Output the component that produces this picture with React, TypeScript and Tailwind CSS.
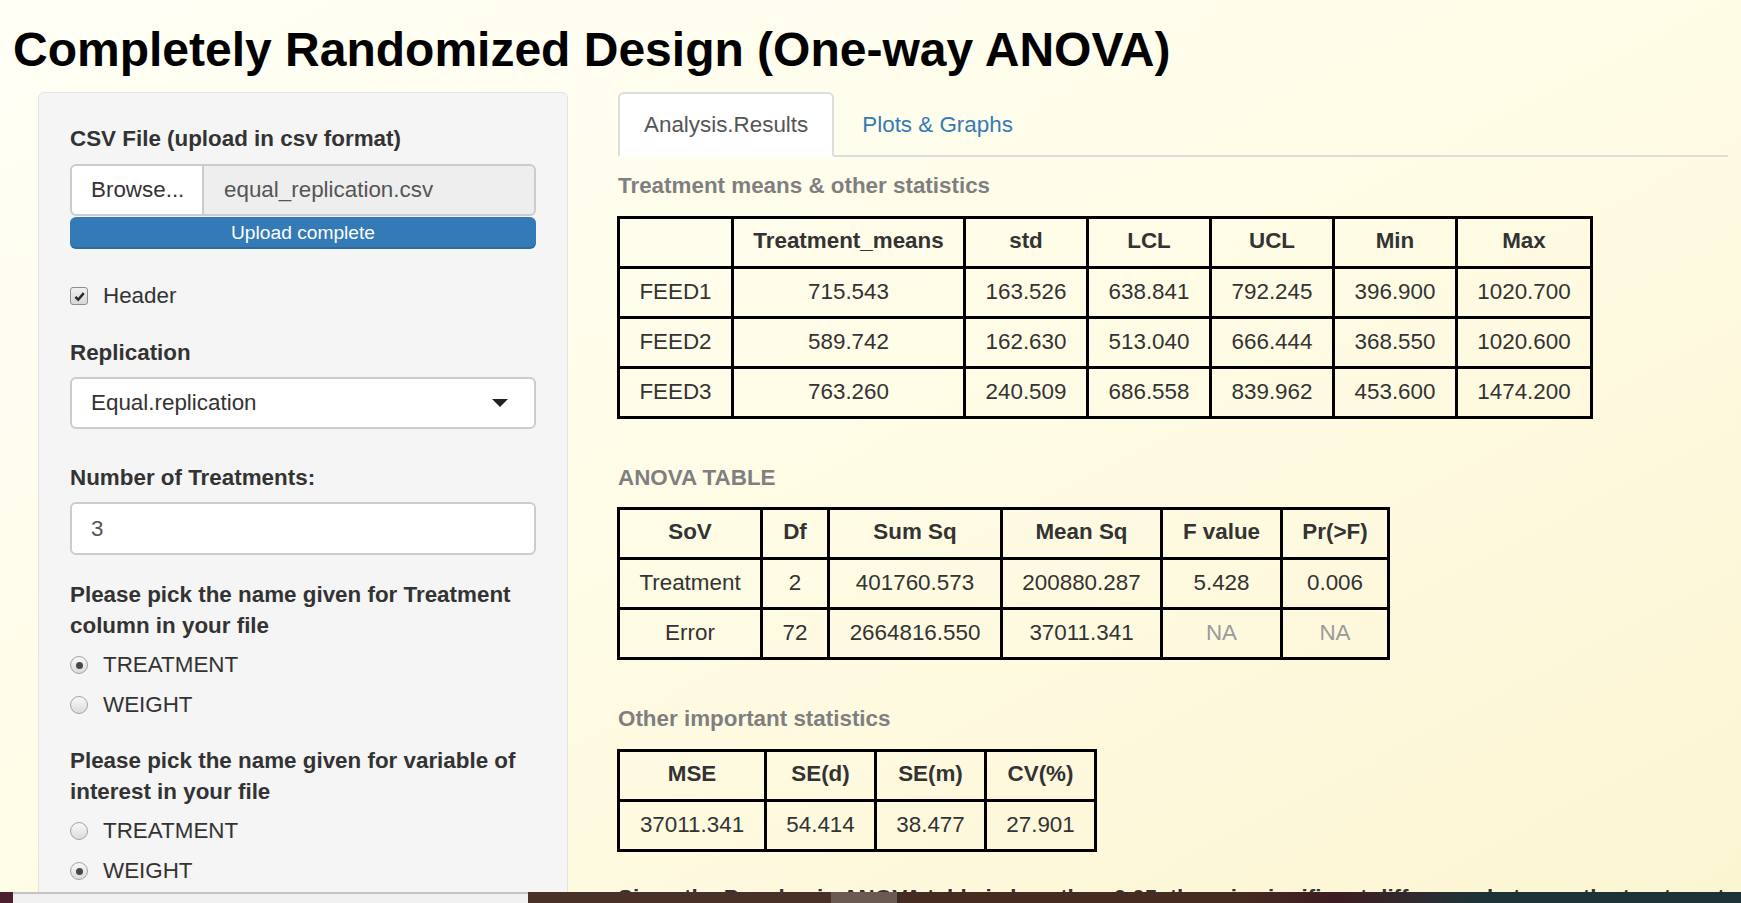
import React from "react";

const FONT = "font-['Liberation_Sans',Arial,Helvetica,sans-serif]";

type TableProps = {
  gridClass: string;
  head: string[];
  rows: string[][];
};

const StatTable: React.FC<TableProps> = ({ gridClass, head, rows }) => {
  return (
    <div className={`grid w-max border-l-[3px] border-t-[3px] border-black ${gridClass}`}>
      {head.map((h, i) => (
        <div
          key={"h" + i}
          className="flex h-[50px] items-center justify-center border-b-[3px] border-r-[3px] border-black pb-[3px] font-bold"
        >
          {h}
        </div>
      ))}
      {rows.map((r, ri) =>
        r.map((c, ci) => (
          <div
            key={ri + "-" + ci}
            className={`flex h-[50px] items-center justify-center border-b-[3px] border-r-[3px] border-black pb-[2px] ${
              c === "NA" ? "text-[#9a9a9a]" : ""
            }`}
          >
            {c}
          </div>
        ))
      )}
    </div>
  );
};

const Radio: React.FC<{ checked?: boolean; label: string }> = ({ checked, label }) => (
  <div className="mt-[8px] flex h-[32px] items-center">
    <span className="flex h-[18px] w-[18px] items-center justify-center rounded-full border border-[#a3a3a3] bg-linear-to-b from-[#f8f8f8] to-[#dcdcdc]">
      {checked && <span className="h-[7px] w-[7px] rounded-full bg-[#474747]" />}
    </span>
    <span className="ml-[15px]">{label}</span>
  </div>
);

const Sidebar: React.FC = () => (
  <aside className="ml-[38px] w-[530px] shrink-0 rounded-[6px] border border-[#e3e3e3] bg-[#f5f5f5] px-[31px] pb-[40px] pt-[30px]">
    <label className="block font-bold">CSV File (upload in csv format)</label>
    <div className="mt-[9px] flex h-[52px]">
      <div className="flex w-[134px] items-center rounded-l-[6px] border-2 border-[#cccccc] bg-white pl-[19px]">
        Browse...
      </div>
      <div className="flex flex-1 items-center rounded-r-[6px] border-2 border-l-0 border-[#cccccc] bg-[#eeeeee] pl-[20px] text-[#555]">
        equal_replication.csv
      </div>
    </div>
    <div className="mt-[1px] h-[32px] rounded-[6px] bg-[#337ab7] text-center text-[19.2px] leading-[32px] text-white shadow-[inset_0_-2px_0_rgba(0,0,0,0.12)]">
      Upload complete
    </div>

    <div className="mt-[31px] flex h-[32px] items-center">
      <span className="flex h-[18px] w-[18px] items-center justify-center rounded-[3px] border border-[#8e8e8e] bg-linear-to-b from-[#f0f0f0] to-[#d8d8d8]">
        <svg viewBox="0 0 12 12" className="h-[13px] w-[13px]">
          <path d="M2.2 6.4l2.6 2.6L9.9 2.9" fill="none" stroke="#2a2a2a" strokeWidth="2.3" />
        </svg>
      </span>
      <span className="ml-[15px]">Header</span>
    </div>

    <label className="mt-[25px] block font-bold">Replication</label>
    <div className="mt-[8px] flex h-[52px] items-center justify-between rounded-[6px] border-2 border-[#cccccc] bg-white pl-[19px] pr-[26px]">
      <span>Equal.replication</span>
      <span className="h-0 w-0 border-x-[8px] border-t-[8px] border-x-transparent border-t-[#222]" />
    </div>

    <label className="mt-[33px] block font-bold">Number of Treatments:</label>
    <div className="mt-[8px] flex h-[53px] items-center rounded-[6px] border-2 border-[#cccccc] bg-white pl-[19px] text-[#555]">
      3
    </div>

    <label className="mt-[24px] block font-bold leading-[31px]">
      Please pick the name given for Treatment column in your file
    </label>
    <Radio checked label="TREATMENT" />
    <Radio label="WEIGHT" />

    <label className="mt-[24px] block font-bold leading-[31px]">
      Please pick the name given for variable of interest in your file
    </label>
    <Radio label="TREATMENT" />
    <Radio checked label="WEIGHT" />
  </aside>
);

const Results: React.FC = () => (
  <main className="ml-[50px] w-[1110px] shrink-0">
    <div className="flex border-b-2 border-[#dddddd]">
      <div className="-mb-[2px] h-[65px] rounded-t-[6px] border-2 border-[#dddddd] border-b-transparent bg-white px-[24px] pt-[15px] text-[#555]">
        Analysis.Results
      </div>
      <div className="-mb-[2px] ml-[2px] h-[65px] border-2 border-transparent px-[24px] pt-[15px] text-[#337ab7]">
        Plots &amp; Graphs
      </div>
    </div>

    <h4 className="mt-[13px] font-bold text-[#7f7f7f]">Treatment means &amp; other statistics</h4>
    <div className="-ml-[1px] mt-[14px]">
      <StatTable
        gridClass="grid-cols-[114px_232px_123px_123px_123px_123px_135px]"
        head={["", "Treatment_means", "std", "LCL", "UCL", "Min", "Max"]}
        rows={[
          ["FEED1", "715.543", "163.526", "638.841", "792.245", "396.900", "1020.700"],
          ["FEED2", "589.742", "162.630", "513.040", "666.444", "368.550", "1020.600"],
          ["FEED3", "763.260", "240.509", "686.558", "839.962", "453.600", "1474.200"],
        ]}
      />
    </div>

    <h4 className="mt-[43px] font-bold text-[#7f7f7f]">ANOVA TABLE</h4>
    <div className="-ml-[1px] mt-[13px]">
      <StatTable
        gridClass="grid-cols-[143px_67px_173px_160px_120px_107px]"
        head={["SoV", "Df", "Sum Sq", "Mean Sq", "F value", "Pr(>F)"]}
        rows={[
          ["Treatment", "2", "401760.573", "200880.287", "5.428", "0.006"],
          ["Error", "72", "2664816.550", "37011.341", "NA", "NA"],
        ]}
      />
    </div>

    <h4 className="mt-[43px] font-bold text-[#7f7f7f]">Other important statistics</h4>
    <div className="-ml-[1px] mt-[14px]">
      <StatTable
        gridClass="grid-cols-[147px_110px_110px_110px]"
        head={["MSE", "SE(d)", "SE(m)", "CV(%)"]}
        rows={[["37011.341", "54.414", "38.477", "27.901"]]}
      />
    </div>

    <p className="mt-[30px] whitespace-nowrap font-bold">
      Since the Pr value in ANOVA table is less than 0.05, there is significant difference between the treatments
    </p>
  </main>
);

const Taskbar: React.FC = () => (
  <div className="absolute bottom-0 left-0 flex h-[11px] w-full">
    <div className="w-[13px] bg-[#4d1f2e]" />
    <div className="w-[515px] border-t-2 border-[#c3c3c3] bg-[#f0f0f0]" />
    <div className="w-[303px] bg-[#4a3127]" />
    <div className="w-[66px] bg-[#6b5a51]" />
    <div className="w-[3px] bg-[#3a2820]" />
    <div className="flex-1 bg-linear-to-r from-[#462b21] from-40% via-[#3d1b21] via-52% to-[#1e3338] to-68%" />
  </div>
);

export default function App() {
  return (
    <div
      className={`relative h-[903px] w-[1741px] overflow-hidden bg-linear-to-br from-[#fffff6] via-[#fffce6] to-[#fcf5d2] text-[22.4px] leading-[32px] text-[#333] ${FONT}`}
    >
      <h1 className="pl-[13px] pt-[23px] text-[48px] font-bold leading-[53px] text-black">
        Completely Randomized Design (One-way ANOVA)
      </h1>
      <div className="mt-[16px] flex items-start">
        <Sidebar />
        <Results />
      </div>
      <Taskbar />
    </div>
  );
}
